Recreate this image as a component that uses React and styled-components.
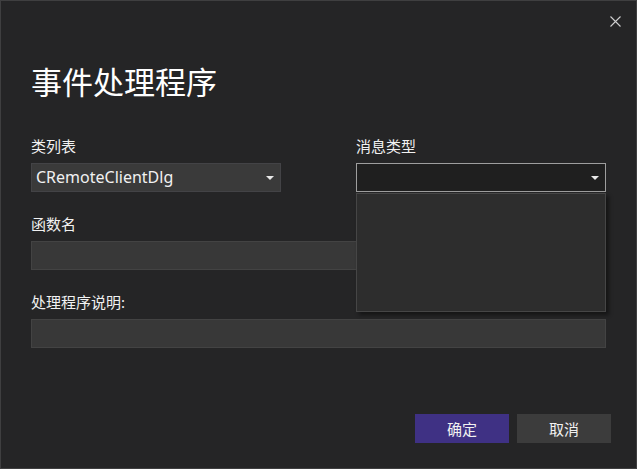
import styled, { createGlobalStyle } from 'styled-components';

const GlobalStyle = createGlobalStyle`
  html, body {
    margin: 0;
    padding: 0;
    background: #252526;
  }
  * {
    box-sizing: border-box;
  }
`;

// 대화 상자 전체 창
const Dialog = styled.div`
  width: 637px;
  height: 469px;
  display: flex;
  flex-direction: column;
  background: #252526;
  border: 1px solid #3f3f40;
  color: #f1f1f1;
  font-family: "Noto Sans", "Noto Sans CJK SC", sans-serif;
  font-size: 15px;
`;

const TopBar = styled.div`
  display: flex;
  justify-content: flex-end;
  padding: 15px 15px 0 0;
`;

const CloseButton = styled.button`
  display: flex;
  width: 11px;
  height: 11px;
  padding: 0;
  border: none;
  background: none;
  cursor: pointer;
`;

const Title = styled.h1`
  margin: 35px 0 0 30px;
  font-size: 31px;
  line-height: 37px;
  font-weight: 400;
  color: #ffffff;
  font-family: "Noto Sans CJK SC", sans-serif;
`;

const Form = styled.div`
  display: grid;
  grid-template-columns: 250px 250px;
  column-gap: 75px;
  row-gap: 22px;
  padding: 37px 30px 0 30px;
`;

const Field = styled.div`
  display: flex;
  flex-direction: column;
  grid-column: ${(props) => (props.wide ? '1 / 3' : 'auto')};
  position: relative;
`;

const Label = styled.label`
  height: 20px;
  line-height: 20px;
  margin-bottom: 7px;
  color: #f1f1f1;
`;

const Combo = styled.div`
  display: flex;
  align-items: center;
  justify-content: space-between;
  height: 29px;
  padding: 0 6px 0 4px;
  background: ${(props) => (props.focused ? '#1f1f1f' : '#3a3a3a')};
  border: 1px solid ${(props) => (props.focused ? '#9e9e9e' : '#434346')};
  color: #f1f1f1;
  font-size: 16px;
  line-height: 27px;
`;

const Arrow = styled.span`
  width: 0;
  height: 0;
  border-left: 4px solid transparent;
  border-right: 4px solid transparent;
  border-top: 4px solid #e8e8e8;
`;

// 목록이 펼쳐진 드롭다운 (다른 입력 위에 겹침)
const DropList = styled.div`
  position: absolute;
  left: 0;
  right: 0;
  top: 57px;
  height: 119px;
  background: #2d2d2d;
  border: 1px solid #464646;
  box-shadow: 3px 3px 4px rgba(0, 0, 0, 0.45);
  z-index: 2;
`;

const Input = styled.input`
  height: 29px;
  padding: 0 4px;
  background: #383838;
  border: 1px solid #434343;
  color: #f1f1f1;
  font: inherit;
  outline: none;
`;

const Footer = styled.div`
  display: flex;
  justify-content: flex-end;
  gap: 8px;
  margin-top: auto;
  padding: 0 25px 25px 0;
`;

const Button = styled.button`
  width: 94px;
  height: 29px;
  border: none;
  background: ${(props) => (props.primary ? '#3f3184' : '#3c3c3c')};
  color: #f1f1f1;
  font-family: "Noto Sans CJK SC", sans-serif;
  font-size: 15px;
  cursor: pointer;
`;

export default function App() {
  return (
    <>
      <GlobalStyle />
      <Dialog>
        <TopBar>
          <CloseButton aria-label="关闭">
            <svg width="11" height="11" viewBox="0 0 11 11">
              <path d="M0.5 0.5 L10.5 10.5 M10.5 0.5 L0.5 10.5" stroke="#cfcfcf" strokeWidth="1.1" />
            </svg>
          </CloseButton>
        </TopBar>
        <Title>事件处理程序</Title>
        <Form>
          <Field>
            <Label>类列表</Label>
            <Combo>
              CRemoteClientDlg
              <Arrow />
            </Combo>
          </Field>
          <Field>
            <Label>消息类型</Label>
            <Combo focused>
              <span />
              <Arrow />
            </Combo>
            <DropList />
          </Field>
          <Field wide>
            <Label>函数名</Label>
            <Input />
          </Field>
          <Field wide>
            <Label>处理程序说明:</Label>
            <Input />
          </Field>
        </Form>
        <Footer>
          <Button primary>确定</Button>
          <Button>取消</Button>
        </Footer>
      </Dialog>
    </>
  );
}
